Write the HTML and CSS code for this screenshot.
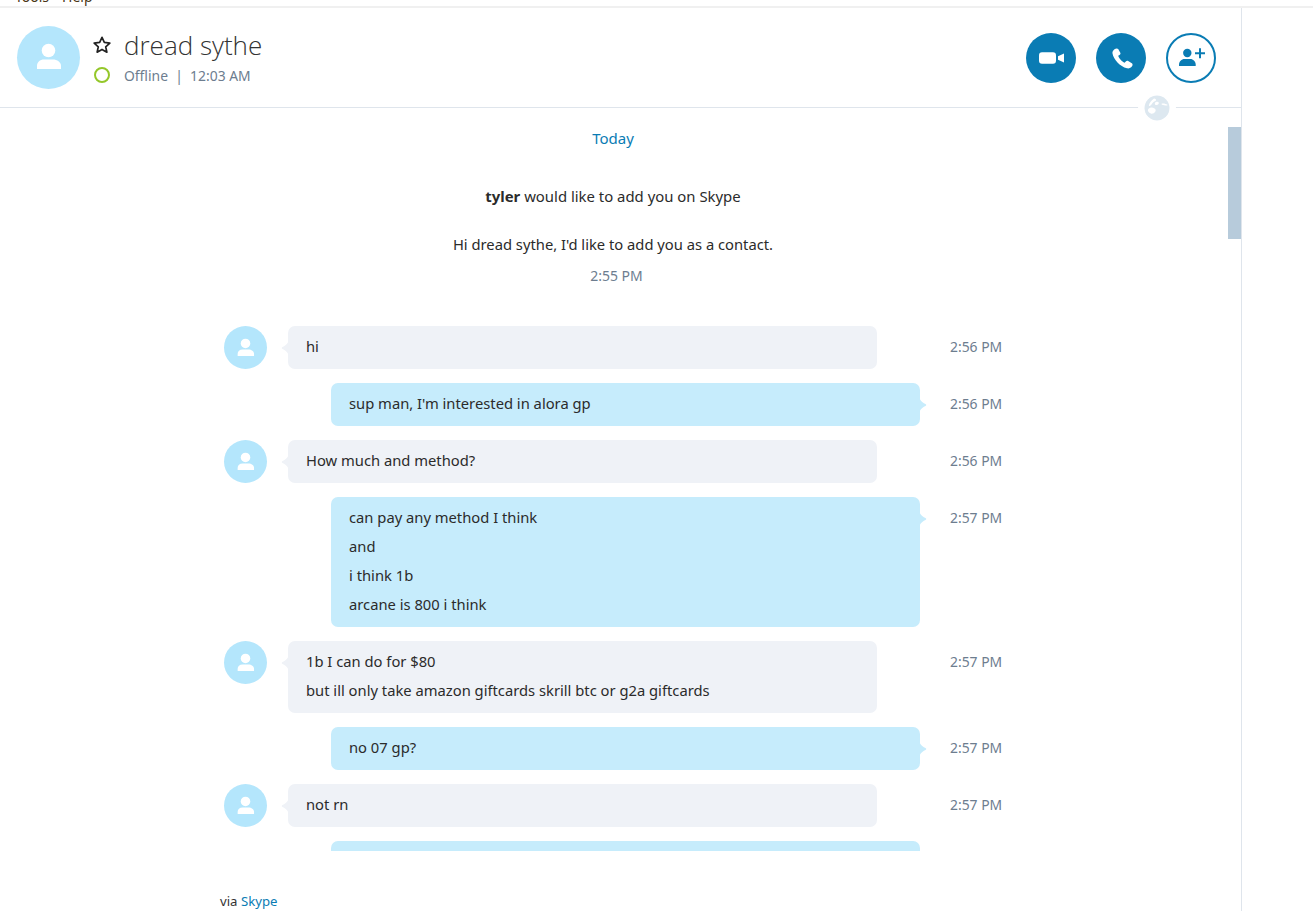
FILE: index.html
```html
<!DOCTYPE html>
<html lang="en">
<head>
<meta charset="utf-8">
<title>Skype</title>
<link rel="stylesheet" href="styles.css">
</head>
<body>
<div class="menubar"><span class="menu-item">Tools</span><span class="menu-item">Help</span></div>
<main class="app">
  <header class="header">
    <div class="avatar avatar-lg">
      <svg viewBox="0 0 63 63"><circle cx="31.500" cy="24.500" r="6.800"/><path d="M20 43v-3c0-4 3-6.500 7-6.500h9c4 0 8 2.500 8 6.500v3z"/></svg>
    </div>
    <div class="identity">
      <div class="name-row">
        <svg class="star" viewBox="1.500 1.500 17 17"><path d="M10 2.800l2.200 4.800 5.200.6-3.900 3.500 1.100 5.100L10 14.200l-4.600 2.600 1.100-5.100-3.900-3.500 5.200-.6z"/></svg>
        <h1 class="name">dread sythe</h1>
      </div>
      <div class="status-row">
        <span class="presence"></span>
        <span class="status">Offline &nbsp;|&nbsp; 12:03 AM</span>
      </div>
    </div>
    <div class="actions">
      <button class="action" aria-label="Video call">
        <svg viewBox="0 0 50 50"><rect x="13" y="19.300" width="17" height="11.400" rx="3"/><path d="M32 23.200l6-2.700v9l-6-2.700z"/></svg>
      </button>
      <button class="action" aria-label="Call">
        <svg viewBox="0 0 50 50"><path transform="translate(16 15)" d="M2.500 1.200C3.500.3 5.500 0 6.200 1l2.100 3.800c.5 1 .1 1.700-.8 2.200l-1.300.8c.7 2.400 3.800 6 6.400 7l1.200-1.300c.7-.8 1.600-.9 2.400-.5l3.600 2.200c1 .7 1 2 .2 3-1.200 1.600-3 2.600-5 2.100C8 18.500 1.500 11.500.5 5.500.2 3.800 1 2.300 2.500 1.200z"/></svg>
      </button>
      <button class="action action-outline" aria-label="Add contact">
        <svg viewBox="2 2 46 46"><circle cx="21.300" cy="20" r="4.200"/><path d="M13 33v-1.500c0-3 2.500-5.500 5.500-5.500h5.700c3 0 5.500 2.500 5.500 5.500V33z"/><path class="plus" d="M29 20.300h10M34 15.300v10"/></svg>
      </button>
    </div>
    <svg class="globe" viewBox="0 0 26 26"><circle cx="13" cy="13" r="12.500"/><path class="land" d="M10 3.500c1.500.3 2.500.8 2 1.800-.4 1-2 1.200-3 2.200-1 1-1.500 2.500-2.800 3.300-.8.400-1.500.2-1.300-.6C5.300 8 7.500 5.500 10 3.500zM6 13c1.500-.8 3-.2 4.500.4 1.300.6 1.500 2.200.7 3.400-.8 1.300-2.800 2.400-4.300 1.800-1.500-.6-3-2-3-3.400 0-1 .9-1.800 2.100-2.200zM12 7c1.300-.5 2.500-.2 2.800.7.200 1-.8 2-2 2.300-1 .2-2-.3-2-1.200 0-.7.500-1.400 1.200-1.800zM18 8.500c2-.3 4 .3 5.500 1.300.2.500-.2.900-1 .8-1.800-.2-3-.3-4.500-.9-.6-.3-.6-1 0-1.200z"/></svg>
  </header>
  <section class="conversation">
    <div class="day">Today</div>
    <div class="request">
      <p class="request-title"><strong>tyler</strong> would like to add you on Skype</p>
      <p class="request-body">Hi dread sythe, I'd like to add you as a contact.</p>
      <p class="request-time">2:55 PM</p>
    </div>
    <ol class="messages">
      <li class="msg in">
        <div class="avatar avatar-sm"><svg viewBox="0 0 63 63"><circle cx="31.500" cy="25.500" r="7"/><path d="M20 44v-3c0-4 3-6.500 7-6.500h9c4 0 8 2.500 8 6.500v3z"/></svg></div>
        <div class="bubble"><p>hi</p></div>
        <time class="time">2:56 PM</time>
      </li>
      <li class="msg out">
        <div class="bubble"><p>sup man, I'm interested in alora gp</p></div>
        <time class="time">2:56 PM</time>
      </li>
      <li class="msg in">
        <div class="avatar avatar-sm"><svg viewBox="0 0 63 63"><circle cx="31.500" cy="25.500" r="7"/><path d="M20 44v-3c0-4 3-6.500 7-6.500h9c4 0 8 2.500 8 6.500v3z"/></svg></div>
        <div class="bubble"><p>How much and method?</p></div>
        <time class="time">2:56 PM</time>
      </li>
      <li class="msg out">
        <div class="bubble"><p>can pay any method I think</p><p>and</p><p>i think 1b</p><p>arcane is 800 i think</p></div>
        <time class="time">2:57 PM</time>
      </li>
      <li class="msg in">
        <div class="avatar avatar-sm"><svg viewBox="0 0 63 63"><circle cx="31.500" cy="25.500" r="7"/><path d="M20 44v-3c0-4 3-6.500 7-6.500h9c4 0 8 2.500 8 6.500v3z"/></svg></div>
        <div class="bubble"><p>1b I can do for $80</p><p>but ill only take amazon giftcards skrill btc or g2a giftcards</p></div>
        <time class="time">2:57 PM</time>
      </li>
      <li class="msg out">
        <div class="bubble"><p>no 07 gp?</p></div>
        <time class="time">2:57 PM</time>
      </li>
      <li class="msg in">
        <div class="avatar avatar-sm"><svg viewBox="0 0 63 63"><circle cx="31.500" cy="25.500" r="7"/><path d="M20 44v-3c0-4 3-6.500 7-6.500h9c4 0 8 2.500 8 6.500v3z"/></svg></div>
        <div class="bubble"><p>not rn</p></div>
        <time class="time">2:57 PM</time>
      </li>
      <li class="msg out">
        <div class="bubble"><p>&nbsp;</p></div>
      </li>
    </ol>
    <div class="scroll-thumb"></div>
  </section>
  <footer class="via">via <a href="#">Skype</a></footer>
</main>
</body>
</html>
```
FILE: styles.css
```css
* { box-sizing: border-box; }
html, body { margin: 0; padding: 0; height: 100%; overflow: hidden; background: #fff; }
body { font-family: "Noto Sans", "Open Sans", "Liberation Sans", sans-serif; color: #2b2b2b; }
.menubar {
  height: 8px; overflow: hidden; border-bottom: 2px solid #f0f0f0;
  font-size: 14px; line-height: 12px; color: #4a3515; padding-left: 15px;
}
.menubar .menu-item { display: inline-block; margin-right: 13px; position: relative; top: -9px; }
.app { width: 1242px; height: 903px; border-right: 1px solid #dfe5ec; display: flex; flex-direction: column; }
.header {
  position: relative; flex: none; height: 100px; border-bottom: 1px solid #dfe5ec;
  display: flex; align-items: flex-start; padding: 18px 25px 0 17px;
}
.avatar { border-radius: 50%; background: #b4e6fc; display: flex; align-items: center; justify-content: center; flex: none; }
.avatar svg { fill: #fff; width: 100%; height: 100%; }
.avatar-lg { width: 63px; height: 63px; }
.avatar-sm { width: 43px; height: 43px; }
.identity { margin-left: 13px; }
.name-row { display: flex; align-items: center; height: 40px; }
.star { width: 18px; height: 18px; margin-bottom: 3px; fill: none; stroke: #222; stroke-width: 1.600; stroke-linejoin: round; flex: none; }
.name { margin: -2px 0 0 13px; font-family: "Open Sans", "Noto Sans", sans-serif; font-size: 26px; font-weight: 300; line-height: 40px; color: #333; }
.status-row { display: flex; align-items: center; height: 20px; margin-top: -1px; }
.presence { width: 16px; height: 16px; border-radius: 50%; border: 2px solid #94c72a; margin-left: 1px; flex: none; }
.status { margin-left: 14px; font-size: 13.900px; color: #6d7d8f; }
.actions { margin-left: auto; display: flex; gap: 20px; margin-top: 7px; }
.action {
  width: 50px; height: 50px; border-radius: 50%; border: 0; padding: 0; background: #0a7cb4;
  display: flex; align-items: center; justify-content: center;
}
.action svg { fill: #fff; width: 100%; height: 100%; display: block; }
.action-outline { background: #fff; border: 2px solid #0a7cb4; }
.action-outline svg { fill: #0a7cb4; }
.action-outline .plus { fill: none; stroke: #0a7cb4; stroke-width: 2; }
.globe { position: absolute; left: 1144px; top: 87px; width: 26px; height: 26px; fill: #dde8f0; box-shadow: 0 0 0 6px #fff; border-radius: 50%; background: #fff; }
.globe .land { fill: #fff; }
.conversation { position: relative; flex: none; height: 743px; overflow: hidden; }
.day { text-align: center; color: #0a7cb4; font-size: 15px; line-height: 20px; padding: 20px 15px 0 0; }
.request { text-align: center; margin-top: 38px; padding-right: 15px; font-size: 14.900px; line-height: 20px; }
.request p { margin: 0; }
.request .request-body { margin-top: 28px; font-size: 14.750px; }
.request .request-time { margin-top: 12px; padding-left: 7px; color: #6d7d8f; font-size: 14px; }
.messages { list-style: none; margin: 40px 0 0; padding: 0 0 0 224px; display: flex; flex-direction: column; gap: 14px; }
.msg { display: flex; align-items: flex-start; position: relative; width: 790px; }
.bubble { position: relative; border-radius: 7px; padding: 6px 18px 8px; width: 589px; font-size: 14.750px; line-height: 29px; flex: none; }
.bubble p { margin: 0; }
.bubble::after {
  content: ""; position: absolute; top: 12px; width: 8px; height: 20px; background: inherit;
  clip-path: path("M8 0C8 4 6 7 1.500 9C.5 9.500 .5 10.500 1.500 11C6 13 8 16 8 20Z");
}
.in .bubble { margin-left: 21px; background: #eff2f7; }
.in .bubble::after { left: -7px; }
.out .bubble { margin-left: 107px; background: #c6ecfc; }
.out .bubble::after { right: -7px; transform: scaleX(-1); }
.time { position: absolute; left: 726px; top: 11px; font-size: 13.900px; line-height: 20px; color: #6d7d8f; white-space: nowrap; }
.scroll-thumb { position: absolute; top: 19px; right: 0; width: 13px; height: 112px; background: #b7cbdb; }
.via { padding: 41px 0 0 220px; font-size: 13.200px; line-height: 18px; color: #333; }
.via a { color: #0a7cb4; text-decoration: none; }
```
